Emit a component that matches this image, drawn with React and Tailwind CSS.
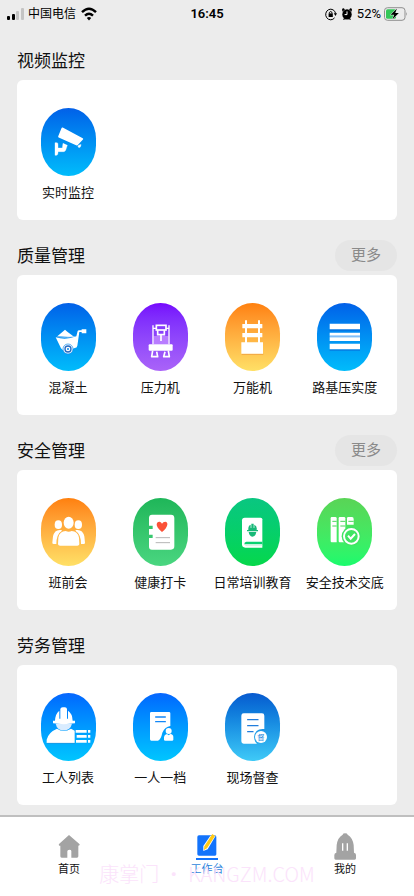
import React from 'react';
import clsx from 'clsx';

const CameraIcon = () => (
    <g fill="#fff" stroke="#fff" strokeLinejoin="round">
        <path d="M64 61 L124 93 L108 110 L54 86 Z" strokeWidth="5" />
        <path d="M113 112 l7 -2 l-3 8 l-6 -1 Z" strokeWidth="2" />
        <path d="M42 104 h6 q3 0 3 6 v10 h13 l2 -14 l13 6 l-5 15 q-2 4 -6 4 h-17 v4 q0 6 -4 7 h-5 Z" strokeWidth="1" />
    </g>
);

const BarrowIcon = () => (
    <>
        <path d="M49 100 L72 80 L79 86 L101 103 Z" fill="#fff" />
        <path d="M44 103 Q75 113 106 100 L110 84 Q111 82 114 82 H122 V79 H136 V91 H122 V87 H115 L109 128 Q108 135 101 135 L72 148 L60 136 Z" fill="#fff" />
        <path d="M49 101 Q75 108 103 100" fill="none" stroke="#8cc4f7" strokeWidth="2" />
        <circle cx="81" cy="138" r="15" fill="#fff" stroke="#0789ec" strokeWidth="2" />
        <circle cx="81" cy="138" r="9" fill="none" stroke="#2469c2" strokeWidth="4" />
        <circle cx="81" cy="138" r="3" fill="#0789ec" />
    </>
);

const PressIcon = () => (
    <g fill="none" stroke="#fff">
        <rect x="62" y="99" width="44" height="25" fill="#b97dff" stroke="none" />
        <path d="M60 67 V124 M108 67 V124 M58 76 H69 M99 76 H110" strokeWidth="4" />
        <rect x="70" y="67" width="29" height="14" strokeWidth="5" />
        <path d="M74 82 V95 H94 V82 M84 96 V114" strokeWidth="5" />
        <rect x="47" y="124" width="72" height="19" rx="3" fill="#fff" stroke="none" />
        <path d="M59 143 L56 161 H74 L71 146 M96 146 L92 161 H109 L106 143" strokeWidth="5" strokeLinejoin="round" />
    </g>
);

const TestRackIcon = () => (
    <>
        <path d="M50 152 H115 V156 H50 Z" fill="#e88e3a" opacity=".5" />
        <path d="M60 52 h6 v11 h33 v-11 h6 v11 h7 v13 h-7 v14 h7 v13 h-7 v15 h9 v34 H49 v-34 h11 v-15 h-8 v-13 h8 v-14 h-8 v-13 h8 Z M66 76 v14 h33 v-14 Z M66 103 v15 h33 v-15 Z" fill="#fff" fillRule="evenodd" />
    </>
);

const LayersIcon = () => (
    <>
        <path d="M38 137 H129 V144 H38 Z M38 78 H129 V84 H38 Z" fill="#0865d6" opacity=".5" />
        <path d="M38 62 H129 V79 H38 Z M38 89 H129 V98 H38 Z M38 122 H129 V139 H38 Z" fill="#fff" />
        <path d="M38 98 H129 V103 H38 Z" fill="#82bdf8" />
        <path d="M38 103 H129 V114 H38 Z" fill="#fff" />
    </>
);

const TeamIcon = () => (
    <g fill="#fff">
        <ellipse cx="52" cy="80" rx="11" ry="13" />
        <ellipse cx="112" cy="80" rx="11" ry="13" />
        <ellipse cx="83" cy="74" rx="15" ry="18" />
        <path d="M61 96 Q41 93 36 115 L34 134 Q34 138 38 138 H46 Q46 108 63 98 Z" />
        <path d="M105 96 Q125 93 130 115 L132 134 Q132 138 128 138 H120 Q120 108 103 98 Z" />
        <path d="M51 139 L52 119 Q56 99 74 99 Q83 104 92 99 Q110 99 114 119 L115 139 Q114 143 109 143 H57 Q52 143 51 139 Z" />
    </g>
);

const HealthIcon = () => (
    <>
        <path d="M57 50 H114 Q124 50 124 60 V145 Q124 155 114 155 H57 Q48 155 48 146 V120 H59 V110 H48 V93 H59 V83 H48 V60 Q48 50 57 50 Z" fill="#fff" />
        <path d="M87 102 Q70 88 71 78 Q73 70 80 71 Q85 72 87 77 Q90 71 97 71 Q104 72 103 80 Q101 91 87 102 Z" fill="#fb5138" />
        <path d="M68 119 H111 M68 134 H111" stroke="#b6b6b6" strokeWidth="3" />
    </>
);

const BookIcon = () => (
    <>
        <path d="M59 59 H107 Q112 59 112 64 V149 H61 Q51 149 51 139 V67 Q51 59 59 59 Z" fill="#fff" />
        <path d="M58 139 Q58 131 64 131 H112 V139 Z" fill="#0ad171" />
        <path d="M59 138 Q60 143 66 143 H112" fill="none" stroke="#b9eed2" strokeWidth="2" />
        <g fill="#18b877">
            <path d="M70 96 Q69 82 77 80 V90 H79 V77 H86 V90 H88 V80 Q97 83 95 96 Z" />
            <path d="M66 96 H99 V100 H66 Z M71 102 H94 Q92 115 82 116 Q73 115 71 102 Z" />
        </g>
    </>
);

const ArchiveIcon = () => (
    <>
        <g fill="#fff">
            <path d="M44 57 H55 Q59 57 59 61 V133 H44 Q41 133 41 129 V61 Q41 57 44 57 Z" />
            <path d="M68 57 H81 Q85 57 85 61 V133 H68 Q65 133 65 129 V61 Q65 57 68 57 Z" />
            <path d="M94 57 H105 Q110 57 110 63 V80 H90 V61 Q90 57 94 57 Z" />
        </g>
        <path d="M46 70 H59 M46 84 H59 M70 70 H85 M70 84 H85 M94 70 H110" stroke="#47d75b" strokeWidth="3" />
        <circle cx="103" cy="115" r="29" fill="#40e463" />
        <circle cx="103" cy="115" r="22" fill="none" stroke="#fff" strokeWidth="6" />
        <path d="M93 113 L101 122 L114 108" fill="none" stroke="#fff" strokeWidth="6" />
    </>
);

const WorkerIcon = () => (
    <>
        <path d="M44 92 Q48 112 68 112 Q88 112 93 92 Z" fill="#d9ecff" />
        <path d="M36 91 V83 H42 Q43 62 55 53 V77 H58 V48 Q59 43 65 43 H72 Q77 43 78 48 V77 H81 V53 Q94 61 95 83 H102 V91 Q68 96 36 91 Z" fill="#fff" />
        <path d="M17 150 V140 Q22 118 48 107 Q68 120 90 107 L101 113 V150 Z" fill="#fff" />
        <path d="M104 111 H137 V119 H104 Z M141 111 H148 V119 H141 Z M107 126 H137 V134 H107 Z M141 126 H148 V134 H141 Z M105 141 H137 V149 H105 Z M141 141 H148 V149 H141 Z" fill="#fff" />
        <path d="M18 151 H102" stroke="#2b8fd4" strokeWidth="2" />
    </>
);

const ProfileIcon = () => (
    <>
        <path d="M55 57 H108 Q112 57 112 61 V99 Q96 101 88 119 Q84 139 75 143 H55 Q51 143 51 139 V61 Q51 57 55 57 Z" fill="#fff" />
        <path d="M68 72 H97 M68 86 H97" stroke="#1287f7" strokeWidth="4" strokeLinecap="round" />
        <circle cx="107" cy="114" r="9" fill="#fff" />
        <path d="M93 140 V132 Q94 124 102 123 L107 127 L112 123 Q121 124 121 132 V140 Q121 143 117 143 H97 Q93 143 93 140 Z" fill="#fff" />
    </>
);

const InspectIcon = () => (
    <>
        <path d="M56 61 H111 Q118 61 118 68 V108 Q90 105 87 132 Q88 147 96 152 H56 Q49 152 49 145 V68 Q49 61 56 61 Z" fill="#fff" />
        <path d="M68 80 H99 M68 98 H99 M68 116 H84" stroke="#217ddc" strokeWidth="4" strokeLinecap="round" />
        <circle cx="108" cy="132" r="18" fill="#fff" />
        <text x="108" y="140" textAnchor="middle" fontSize="22" fill="#2188dd">督</text>
    </>
);

const HomeIcon = () => (
    <path d="M36 6 L68 34 Q69 38 64 38 V70 Q64 74 60 74 H43 V54 Q43 50 37 50 Q31 50 31 55 V74 H14 Q10 74 10 70 V38 H7 Q4 37 6 33 Z" fill="#a3a3a3" />
);

const WorkbenchIcon = () => (
    <>
        <path d="M12 7 H60 Q64 7 64 12 V64 Q64 68 60 68 H12 Q7 68 7 64 V12 Q7 7 12 7 Z M3 75 H69 V81 H3 Z" fill="#1373fb" />
        <path d="M25 39 L46 8 L62 8 L38 49 L25 54 Z" fill="#fff" />
        <path d="M28 40 L52 3 L60 9 L36 46 L27 51 Z" fill="#ffc914" />
    </>
);

const HelmetIcon = () => (
    <>
        <path d="M29 5 Q30 1 36 1 Q43 1 44 5 Q59 14 62 36 L63 59 Q69 60 69 66 V76 Q69 80 65 80 H8 Q4 80 4 76 V66 Q4 60 10 59 L11 36 Q14 13 29 5 Z" fill="#a3a3a3" />
        <path d="M29 31 V53 M43 31 V53" stroke="#fff" strokeWidth="4" />
    </>
);

const sections = [
    {
        title: '视频监控',
        items: [
            { label: '实时监控', icon: CameraIcon, bg: 'from-[#0560e8] to-[#02bcfb]' },
        ],
    },
    {
        title: '质量管理',
        more: true,
        items: [
            { label: '混凝土', icon: BarrowIcon, bg: 'from-[#0560e8] to-[#02bcfb]' },
            { label: '压力机', icon: PressIcon, bg: 'from-[#7604fd] to-[#aa63f8]' },
            { label: '万能机', icon: TestRackIcon, bg: 'from-[#ff800c] to-[#ffe066]' },
            { label: '路基压实度', icon: LayersIcon, bg: 'from-[#0560e8] to-[#02bcfb]' },
        ],
    },
    {
        title: '安全管理',
        more: true,
        items: [
            { label: '班前会', icon: TeamIcon, bg: 'from-[#ff800c] to-[#ffe066]' },
            { label: '健康打卡', icon: HealthIcon, bg: 'from-[#1eb659] to-[#49d680]' },
            { label: '日常培训教育', icon: BookIcon, bg: 'from-[#0ac681] to-[#06d84a]' },
            { label: '安全技术交底', icon: ArchiveIcon, bg: 'from-[#59d456] to-[#18fb6d]' },
        ],
    },
    {
        title: '劳务管理',
        items: [
            { label: '工人列表', icon: WorkerIcon, bg: 'from-[#0a66fe] to-[#04c6fe]' },
            { label: '一人一档', icon: ProfileIcon, bg: 'from-[#0a66fe] to-[#04c6fe]' },
            { label: '现场督查', icon: InspectIcon, bg: 'from-[#0a5acf] to-[#3fcaf7]' },
        ],
    },
];

const tabs = [
    { label: '首页', icon: HomeIcon },
    { label: '工作台', icon: WorkbenchIcon, active: true },
    { label: '我的', icon: HelmetIcon },
];

const StatusBar = () => (
    <div className="grid h-[25px] grid-cols-3 items-center px-[6px] pt-[2px] text-[13px] text-black">
        <div className="flex items-center gap-1">
            <svg className="h-[14px] w-[18px]" viewBox="0 0 18 14">
                <rect x="1" y="9" width="3" height="4" rx="1" />
                <rect x="6" y="7" width="3" height="6" rx="1" />
                <rect x="10" y="4" width="3" height="9" rx="1" fill="#c4c4c4" />
                <rect x="15" y="1" width="3" height="12" rx="1" fill="#c4c4c4" />
            </svg>
            <span className="text-xs">中国电信</span>
            <svg className="ml-px h-[14px] w-4" viewBox="0 0 16 14" fill="none" stroke="#000" strokeWidth="2.4">
                <path d="M1 5.2 Q8 -1.6 15 5.2" />
                <path d="M4 8.6 Q8 4.8 12 8.6" />
                <path d="M8 13.4 L5.8 11 Q8 9.2 10.2 11 Z" fill="#000" stroke="none" />
            </svg>
        </div>
        <span className="text-center font-semibold">16:45</span>
        <div className="flex items-center justify-end gap-1">
            <svg className="h-[14px] w-3" viewBox="0 0 12 14" fill="none" stroke="#000">
                <path d="M9.6 10.8 A5 5.3 0 1 1 10.6 6.5" />
                <path d="M8.8 6.2 H12 L10.5 9 Z" fill="#000" stroke="none" />
                <rect x="3.6" y="6.4" width="4.2" height="3.6" fill="#000" stroke="none" />
                <path d="M4.4 6.5 V5.4 Q5.7 3.6 7 5.4 V6.5" />
            </svg>
            <svg className="h-[14px] w-3" viewBox="0 0 12 14">
                <path d="M2 1 L4 2.2 L1.5 4.8 L1 2.6 Z M10 1 L8 2.2 L10.5 4.8 L11 2.6 Z" />
                <ellipse cx="6" cy="7.4" rx="4.7" ry="5.2" />
                <path d="M2 13 L3 11 L5 12 Z M10 13 L9 11 L7 12 Z" />
                <path d="M6 4.4 V7.6 H3.6" fill="none" stroke="#fff" />
            </svg>
            <span>52%</span>
            <svg className="-ml-px h-[14px] w-6" viewBox="0 0 24 14">
                <rect x="0.5" y="0.7" width="20.5" height="12.6" rx="3" fill="none" stroke="#8f8f8f" />
                <rect x="2" y="2.2" width="10" height="9.6" rx="1.6" fill="#34c759" />
                <path d="M13 1.5 L6.6 7.8 H10.2 L8.4 12.6 L14.8 6 H11.2 Z" fill="#000" stroke="#eee" strokeWidth="1" paintOrder="stroke" />
                <path d="M22.2 5 Q23.8 7 22.2 9 Z" fill="#8f8f8f" />
            </svg>
        </div>
    </div>
);

const Tile = ({ label, icon: Icon, bg }) => (
    <a href="#" className="flex flex-col items-center">
        <span className={clsx('h-[68px] w-[55px] overflow-hidden rounded-[50%/45%] bg-linear-to-b', bg)}>
            <svg className="h-full w-full" viewBox="0 0 165 204">
                <Icon />
            </svg>
        </span>
        <span className="mt-2 text-[13px] leading-[18px] whitespace-nowrap text-[#111]">{label}</span>
    </a>
);

const Section = ({ title, more, items }) => (
    <section>
        <div className="flex h-[55px] items-center justify-between pt-4">
            <h2 className="pt-[2px] text-[17px] text-[#111]">{title}</h2>
            {more && (
                <button className="h-[31px] rounded-full bg-[#e5e5e5] px-4 text-[15px] text-[#8a8a8a]">更多</button>
            )}
        </div>
        <div className="grid grid-cols-4 rounded-md bg-white pr-[6px] pl-[5px] pt-7 pb-[18px]">
            {items.map((item) => (
                <Tile key={item.label} {...item} />
            ))}
        </div>
    </section>
);

const TabBar = () => (
    <nav className="relative grid grid-cols-3 border-t-2 border-[#bfbfbf] bg-white pt-4 pb-[18px]">
        {tabs.map(({ label, icon: Icon, active }) => (
            <a key={label} href="#" className="flex flex-col items-center gap-px">
                <svg className="h-7 w-6" viewBox="0 0 72 84">
                    <Icon />
                </svg>
                <span className={clsx('text-[11px] leading-4', active ? 'text-[#2f86dc]' : 'text-[#111]')}>{label}</span>
            </a>
        ))}
        <span className="pointer-events-none absolute inset-x-0 bottom-2 text-center font-['Noto_Sans_CJK_SC',sans-serif] text-xl leading-7 font-light whitespace-nowrap text-[#fbe3fb]">
            康掌门 · KANGZM.COM
        </span>
    </nav>
);

const App = () => (
    <div className="flex min-h-screen flex-col bg-[#ececec] font-[Roboto,'Noto_Sans_CJK_SC',sans-serif]">
        <StatusBar />
        <main className="flex-1 px-[17px] pb-[10px]">
            {sections.map((section) => (
                <Section key={section.title} {...section} />
            ))}
        </main>
        <TabBar />
    </div>
);

export default App;
